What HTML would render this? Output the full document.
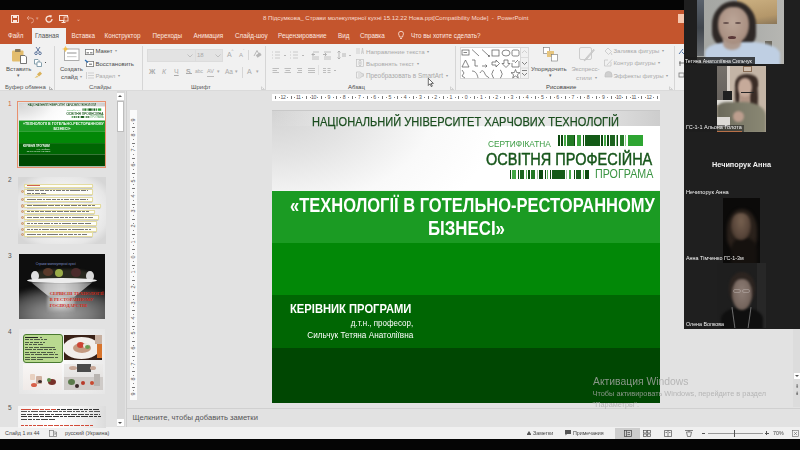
<!DOCTYPE html>
<html><head><meta charset="utf-8">
<style>
*{margin:0;padding:0;box-sizing:border-box}
html,body{width:800px;height:450px;overflow:hidden;background:#050505;font-family:"Liberation Sans",sans-serif;position:relative}
.a{position:absolute;white-space:nowrap;line-height:1}
#title{left:0;top:10px;width:684px;height:34px;background:#c4552d}
#ribbon{left:0;top:44px;width:684px;height:47px;background:#f1f1f1;border-bottom:1px solid #dadada}
#pane{left:0;top:91px;width:800px;height:336px;background:#e2e2e2}
#status{left:0;top:427px;width:800px;height:12px;background:#f0f0f0}
#video{left:684px;top:0;width:116px;height:329px;background:#1f1f1f;overflow:hidden}
.tab{top:33px;font-size:6.3px;color:#fde9e0}
.t6{font-size:6px;color:#4a4a4a}
.dd{font-size:4px;color:#9a9a9a;vertical-align:1px;margin-left:1px}
.dis{color:#a9a9a9}
.sep{position:absolute;width:1px;background:#d6d6d6}
svg{position:absolute;overflow:visible}
.slt{transform-origin:0 0}
.slr{transform-origin:100% 0}
.rl{position:absolute;top:1px;width:10px;text-align:center;font-size:5.2px;letter-spacing:-0.4px;color:#555;line-height:1}
.rt1{position:absolute;top:2px;width:0.7px;height:2.8px;background:#777}
.rd{position:absolute;top:3px;width:0.8px;height:0.8px;background:#888}
.vl{position:absolute;left:0.8px;width:6px;height:6px;text-align:center;font-size:5.5px;color:#555;line-height:6px;transform:rotate(-90deg)}
.vt1{position:absolute;left:2.2px;height:0.7px;width:2.8px;background:#777}
.vd{position:absolute;left:3.2px;width:0.8px;height:0.8px;background:#888}
</style></head><body><div id="wrap" style="position:absolute;left:0;top:0;width:800px;height:450px;filter:blur(0.35px)">
<div class="a" id="title"></div>
<div class="a" id="ribbon"></div>
<div class="a" id="pane"></div>
<div class="a" id="status"></div>

<!-- QAT -->
<svg style="left:11px;top:15px" width="8" height="8" viewBox="0 0 8 8"><rect x="0.5" y="0.5" width="7" height="7" fill="none" stroke="#fbe6dc" stroke-width="1"/><rect x="2" y="0.5" width="4" height="2.5" fill="#fbe6dc"/><rect x="2" y="5" width="4" height="2.5" fill="#fbe6dc"/></svg>
<svg style="left:26px;top:15px" width="9" height="8" viewBox="0 0 9 8"><path d="M1 3 L3 1 M1 3 L3 5 M1 3 H5 a2.5 2.5 0 0 1 0 5" fill="none" stroke="#e09a80" stroke-width="1"/></svg>
<div class="a" style="left:36px;top:16px;font-size:5px;color:#e09a80">▾</div>
<svg style="left:45px;top:14.5px" width="8" height="8" viewBox="0 0 8 8"><path d="M5.5 1.5 A3 3 0 1 0 7 4" fill="none" stroke="#fbe6dc" stroke-width="1.3"/><path d="M4 0 L7 0.5 L6 3 Z" fill="#fbe6dc"/></svg>
<svg style="left:59px;top:15px" width="10" height="8" viewBox="0 0 10 8"><rect x="0.5" y="0.5" width="8" height="5" fill="none" stroke="#fbe6dc"/><path d="M4.5 5.5 V7.5 M2.5 7.5 H6.5" stroke="#fbe6dc"/><rect x="5" y="2" width="4" height="4" fill="#c4552d" stroke="#fbe6dc" stroke-width="0.8"/></svg>
<div class="a" style="left:76px;top:16px;font-size:6px;color:#f0b8a0">⌄</div>
<div class="a" style="left:263px;top:15px;font-size:6.1px;color:#f8ddd2">8 Підсумкова_ Страви молекулярної кухні 15.12.22 Нова.ppt[Compatibility Mode]&nbsp; -&nbsp; PowerPoint</div>
<div class="a" style="left:678px;top:14px;width:6px;height:9px;background:#f6c6ad"></div>

<!-- tabs -->
<div class="a" style="left:32px;top:28px;width:34px;height:16px;background:#f1f1f1"></div>
<div class="a tab" style="left:8px">Файл</div>
<div class="a tab" style="left:35px;color:#555">Главная</div>
<div class="a tab" style="left:71.5px">Вставка</div>
<div class="a tab" style="left:104.5px">Конструктор</div>
<div class="a tab" style="left:152.5px">Переходы</div>
<div class="a tab" style="left:193.5px">Анимация</div>
<div class="a tab" style="left:235px">Слайд-шоу</div>
<div class="a tab" style="left:278px">Рецензирование</div>
<div class="a tab" style="left:338px">Вид</div>
<div class="a tab" style="left:360px">Справка</div>
<svg style="left:398px;top:31px" width="6" height="9" viewBox="0 0 6 9"><path d="M1.5 6 C1.5 4.5 0.5 4 0.5 2.8 A2.5 2.5 0 0 1 5.5 2.8 C5.5 4 4.5 4.5 4.5 6 Z M2 7.5 H4" fill="none" stroke="#fde9e0" stroke-width="0.8"/></svg>
<div class="a tab" style="left:411px">Что вы хотите сделать?</div>

<!-- RIBBON -->
<!-- clipboard -->
<svg style="left:12px;top:48px" width="16" height="16" viewBox="0 0 16 16"><rect x="0" y="2.5" width="11.5" height="11" rx="1" fill="#e3bd6e"/><rect x="3" y="1" width="5.5" height="3" rx="0.5" fill="#8a7a5a"/><path d="M8.5 7.5 H13 L14.5 9 V15.5 H8.5 Z" fill="#fff" stroke="#555" stroke-width="0.8"/></svg>
<div class="a t6" style="left:6px;top:65.5px">Вставить</div>
<div class="a t6" style="left:17px;top:73.0px;font-size:5px;color:#666">▾</div>
<svg style="left:34px;top:47px" width="8" height="8" viewBox="0 0 8 8"><path d="M2 0 L5.5 5 M6 0 L2.5 5" stroke="#3c5a8a" stroke-width="0.8"/><circle cx="2" cy="6.3" r="1.3" fill="none" stroke="#3c5a8a" stroke-width="0.8"/><circle cx="6" cy="6.3" r="1.3" fill="none" stroke="#3c5a8a" stroke-width="0.8"/></svg>
<svg style="left:34px;top:59px" width="8" height="8" viewBox="0 0 8 8"><path d="M0.5 0.5 H4 L5 1.5 V5 H0.5 Z" fill="#fff" stroke="#6a8a9a" stroke-width="0.8"/><path d="M3 3 H6.5 L7.5 4 V7.5 H3 Z" fill="#fff" stroke="#6a8a9a" stroke-width="0.8"/></svg>
<div class="a" style="left:45px;top:62px;width:1px;height:1px;background:#555"></div>
<svg style="left:34px;top:71px" width="8" height="8" viewBox="0 0 8 8"><path d="M0.5 7 L3 4.5 L4.5 6 Z" fill="#e6c36a"/><rect x="3.5" y="1.5" width="4" height="3" transform="rotate(-40 5.5 3)" fill="#d9b15a"/></svg>
<div class="a t6" style="left:5px;top:83.5px;color:#555">Буфер обмена</div>
<svg style="left:48.5px;top:85.5px" width="4" height="4" viewBox="0 0 4 4"><path d="M0.5 0.5 V3.5 H3.5 M1.5 1.5 L3.5 3.5" fill="none" stroke="#888" stroke-width="0.6"/></svg>
<div class="sep" style="left:54px;top:46px;height:44px"></div>

<!-- slides group -->
<svg style="left:63px;top:46px" width="17" height="16" viewBox="0 0 17 16"><rect x="1.5" y="3" width="14.5" height="11.5" fill="#fff" stroke="#9a9a9a" stroke-width="0.8"/><rect x="4" y="6" width="9.5" height="2" fill="#c8c8c8"/><rect x="4" y="10" width="9.5" height="1.2" fill="#d0d0d0"/><circle cx="2.5" cy="3" r="1.8" fill="#f2c14e"/><path d="M2.5 0 V6 M-0.5 3 H5.5" stroke="#f2c14e" stroke-width="0.6"/></svg>
<div class="a t6" style="left:60px;top:65.5px">Создать</div>
<div class="a t6" style="left:61px;top:73.5px">слайд <span class="dd">▾</span></div>
<svg style="left:85px;top:48.5px" width="9" height="6" viewBox="0 0 9 6"><rect x="0.4" y="0.4" width="8.2" height="5.2" fill="#fff" stroke="#777" stroke-width="0.8"/><rect x="1.5" y="3" width="2.5" height="1.5" fill="#999"/><rect x="5" y="3" width="2.5" height="1.5" fill="#999"/></svg>
<div class="a t6" style="left:95.5px;top:48.3px">Макет <span class="dd">▾</span></div>
<svg style="left:85px;top:60px" width="9" height="7" viewBox="0 0 9 7"><rect x="1.4" y="1.4" width="7.2" height="5.2" fill="#fff" stroke="#777" stroke-width="0.8"/><path d="M0 0 L3 2.5" stroke="#2b6cb3" stroke-width="1.2"/><rect x="4" y="3.5" width="3" height="1.5" fill="#999"/></svg>
<div class="a t6" style="left:95.5px;top:60.8px">Восстановить</div>
<svg style="left:86px;top:72px" width="8" height="7" viewBox="0 0 8 7"><path d="M0.5 0 V7 M2 1 H8 M2 3.5 H8 M2 6 H8" stroke="#c8c8c8" stroke-width="0.8"/></svg>
<div class="a t6 dis" style="left:95.5px;top:72.8px">Раздел <span class="dd">▾</span></div>
<div class="a t6" style="left:89px;top:83.5px;color:#555">Слайды</div>
<div class="sep" style="left:142px;top:46px;height:44px"></div>

<!-- font group -->
<div class="a" style="left:147px;top:49.0px;width:48.5px;height:12.5px;background:#e3e3e3;border:1px solid #dcdcdc"></div>
<div class="a" style="left:195px;top:49.0px;width:28px;height:12.5px;background:#e3e3e3;border:1px solid #dcdcdc"></div>
<svg style="left:187px;top:53.5px" width="6" height="4" viewBox="0 0 6 4"><path d="M0.5 0.5 L3 3 L5.5 0.5" fill="none" stroke="#b0b0b0" stroke-width="0.7"/></svg>
<svg style="left:214.5px;top:53.5px" width="6" height="4" viewBox="0 0 6 4"><path d="M0.5 0.5 L3 3 L5.5 0.5" fill="none" stroke="#b0b0b0" stroke-width="0.7"/></svg>
<div class="a t6 dis" style="left:197px;top:51.5px">18</div>
<div class="a t6 dis" style="left:227px;top:51.0px;font-size:7px">A</div>
<div class="a t6 dis" style="left:231.5px;top:49.0px;font-size:4px">^</div>
<div class="a t6 dis" style="left:239px;top:52.0px;font-size:6px">A</div>
<div class="a t6 dis" style="left:243px;top:49.0px;font-size:4px">ˇ</div>
<div class="sep" style="left:248px;top:50.0px;height:10px"></div>
<svg style="left:253px;top:50.0px" width="8" height="8" viewBox="0 0 8 8"><path d="M1 6 L4 0.5 L7 6" fill="none" stroke="#a9a9a9" stroke-width="0.8"/><rect x="3" y="4" width="5" height="3" transform="rotate(-35 5 5)" fill="#b6b6b6"/></svg>
<div class="a t6 dis" style="left:149px;top:68.0px;font-size:7px;font-weight:bold">Ж</div>
<div class="a t6 dis" style="left:162px;top:68.0px;font-size:7px;font-style:italic">К</div>
<div class="a t6 dis" style="left:174px;top:68.0px;font-size:7px;text-decoration:underline">Ч</div>
<div class="a t6 dis" style="left:186px;top:68.0px;font-size:7px;font-weight:bold">S</div>
<div class="a" style="left:185.5px;top:72.5px;width:6px;height:0.8px;background:#a9a9a9"></div>
<div class="a t6 dis" style="left:195px;top:69.0px;font-size:5px">abc</div>
<div class="a t6 dis" style="left:207px;top:68.5px;font-size:5.5px">AV</div>
<div class="a" style="left:207px;top:76.0px;width:7px;height:0.8px;background:#b9b9b9"></div>
<div class="a t6 dis" style="left:217px;top:69.0px;font-size:5px">▾</div>
<div class="a t6 dis" style="left:225px;top:68.5px;font-size:6.5px">Aa</div>
<div class="a t6 dis" style="left:235px;top:69.0px;font-size:5px">▾</div>
<div class="sep" style="left:242px;top:67.0px;height:11px"></div>
<div class="a t6 dis" style="left:247px;top:67.5px;font-size:7px">A</div>
<div class="a t6 dis" style="left:256px;top:69.0px;font-size:5px">▾</div>
<div class="a t6" style="left:191px;top:83.5px;color:#555">Шрифт</div>
<svg style="left:261px;top:86px" width="4" height="4" viewBox="0 0 4 4"><path d="M0.5 0.5 V3.5 H3.5 M1.5 1.5 L3.5 3.5" fill="none" stroke="#bbb" stroke-width="0.6"/></svg>
<div class="sep" style="left:265px;top:46px;height:44px"></div>

<!-- paragraph group -->
<svg style="left:271px;top:51px" width="84" height="26" viewBox="0 0 84 26" fill="none" stroke="#c2c2c2" stroke-width="0.8">
 <path d="M1 1 H2 M1 4 H2 M1 7 H2 M4 1 H9 M4 4 H9 M4 7 H9"/>
 <path d="M13 4 L14 5 L15 4" stroke="#aaa"/>
 <path d="M19 1 H20 M19 4 H20 M19 7 H20 M22 1 H27 M22 4 H27 M22 7 H27"/>
 <path d="M31 4 L32 5 L33 4" stroke="#aaa"/>
 <path d="M42 1 H48 M41 6 H48 M41 8 H48" stroke="#b5b5b5"/><path d="M41 3.5 H44 M42.5 2 L41 3.5 L42.5 5" stroke="#a0a0a0"/>
 <path d="M53 1 H60 M53 6 H60 M53 8 H60" stroke="#b5b5b5"/><path d="M52 3.5 H55 M54 2 L55.5 3.5 L54 5" stroke="#a0a0a0"/>
 <path d="M68 0 V8 M66.5 1.5 L68 0 L69.5 1.5 M66.5 6.5 L68 8 L69.5 6.5 M71 3 H75 M71 5 H75" stroke="#a8a8a8"/>
 <path d="M78 4 L79 5 L80 4" stroke="#aaa"/>
 <path d="M1.5 17.5 H8 M1.5 19.5 H6 M1.5 21.5 H8 M13.5 17.5 H20 M14.5 19.5 H19 M13.5 21.5 H20 M26 17.5 H31 M27 19.5 H31 M26 21.5 H31 M37 17.5 H44 M37 19.5 H44 M37 21.5 H44" stroke="#b8b8b8" stroke-width="0.9"/>
 <path d="M47.5 14 V24" stroke="#dcdcdc"/>
 <path d="M52 17.5 H55 M56.5 17.5 H59.5 M52 19.5 H55 M56.5 19.5 H59.5 M52 21.5 H55 M56.5 21.5 H59.5" stroke="#b8b8b8" stroke-width="0.9"/>
 <path d="M63 19 L64 20 L65 19" stroke="#aaa"/>
</svg>
<svg style="left:356px;top:47px" width="9" height="33" viewBox="0 0 9 33" fill="none" stroke="#c0c0c0" stroke-width="0.7">
 <path d="M1 1 V7 M3 1 V7 M5.5 7 L6.5 1 L7.5 7 M5.8 5 H7.2"/>
 <rect x="0.5" y="12.5" width="7" height="7"/><path d="M4 13 V19 M2.5 14.5 L4 13 L5.5 14.5 M2.5 17.5 L4 19 L5.5 17.5 M2 16 H6"/>
 <path d="M0.5 25 H4 L8 28 L4 31 H0.5 Z M2 27 H8 M2 29 H8"/>
</svg>
<div class="a t6 dis" style="left:366px;top:49px;font-size:6.2px">Направление текста <span class="dd">▾</span></div>
<div class="a t6 dis" style="left:366px;top:61.3px;font-size:6.2px">Выровнять текст <span class="dd">▾</span></div>
<div class="a t6 dis" style="left:366px;top:73.2px;font-size:6.35px">Преобразовать в SmartArt <span class="dd">▾</span></div>
<div class="a t6" style="left:348px;top:83.5px;color:#444">Абзац</div>
<svg style="left:449.5px;top:86px" width="4" height="4" viewBox="0 0 4 4"><path d="M0.5 0.5 V3.5 H3.5 M1.5 1.5 L3.5 3.5" fill="none" stroke="#bbb" stroke-width="0.6"/></svg>
<div class="sep" style="left:454.5px;top:46px;height:44px"></div>

<!-- drawing group -->
<div class="a" style="left:459.5px;top:47px;width:61px;height:32px;background:#fff;border:1px solid #d8d8d8"></div>
<div class="a" style="left:520px;top:47px;width:9px;height:32px;background:#f1f1f1;border:1px solid #d8d8d8"></div>
<svg style="left:520px;top:47px" width="9" height="32" viewBox="0 0 9 32" fill="none" stroke-width="0.8">
 <path d="M2 6 L4.5 3.5 L7 6" stroke="#c8c8c8"/>
 <path d="M0 10.5 H9 M0 21 H9" stroke="#d8d8d8"/>
 <path d="M2 15 L4.5 17.5 L7 15" stroke="#666"/>
 <path d="M2 23.5 H7 M2 26 L4.5 28.5 L7 26" stroke="#666"/>
</svg>
<svg style="left:461px;top:49px" width="60" height="30" viewBox="0 0 60 30" fill="none" stroke="#555" stroke-width="0.7">
 <rect x="1" y="1" width="7" height="5"/><path d="M2.5 3.5 H6"/>
 <path d="M11 0.5 L18 7"/>
 <path d="M21 0.5 L28 7"/><circle cx="28" cy="7" r="0.6" fill="#555"/>
 <rect x="31" y="1" width="7" height="6"/>
 <ellipse cx="45" cy="4" rx="4" ry="3"/>
 <rect x="51" y="1" width="7" height="6" rx="1.5"/>
 <path d="M1 18 L4.5 11 L8 18 Z"/>
 <path d="M11 11 H14 V17 H17"/>
 <path d="M21 17 H26 M24.5 15.5 L26 17 L24.5 18.5"/>
 <path d="M31 13 H35 V11 L38.5 14.5 L35 18 V16 H31 Z"/>
 <path d="M43 11 H47 V14.5 H49 L45 18.5 L41 14.5 H43 Z"/>
 <path d="M51 12 H54 M58 12 V18 H51 V14 M54 14 L57 11"/>
 <path d="M1 21 L3 24 L1 27 L4 29"/>
 <path d="M11 22 C14 22 16 24 17 29"/>
 <path d="M19 24 C21 20 23 22 24 25 C25 28 27 27 28 29"/>
 <path d="M33 21 C31 21 32 25 30.5 25 C32 25 31 29 33 29"/>
 <path d="M39 21 C41 21 40 25 41.5 25 C40 25 41 29 39 29"/>
 <path d="M54.5 20.5 L55.7 23.6 L59 23.7 L56.4 25.7 L57.3 28.9 L54.5 27 L51.7 28.9 L52.6 25.7 L50 23.7 L53.3 23.6 Z"/>
</svg>
<svg style="left:543px;top:47px" width="16" height="15" viewBox="0 0 16 15"><rect x="0.5" y="0.5" width="6" height="6" fill="#fff" stroke="#777" stroke-width="0.6"/><rect x="4" y="4" width="7" height="6" fill="#e6c57e"/><rect x="8.5" y="7.5" width="6" height="6.5" fill="#fff" stroke="#777" stroke-width="0.6"/></svg>
<div class="a t6" style="left:531px;top:66.2px">Упорядочить</div>
<div class="a t6" style="left:549px;top:73.0px;font-size:5px;color:#666">▾</div>
<svg style="left:579px;top:47px" width="16" height="16" viewBox="0 0 16 16" fill="none" stroke="#c4c4c4" stroke-width="0.8"><rect x="0.5" y="0.5" width="12" height="12" rx="1.5"/><path d="M15 2 L7 11 L5 14 L8 12 L15.5 3" fill="#d0d0d0"/></svg>
<div class="a t6 dis" style="left:571.5px;top:66.2px">Экспресс-</div>
<div class="a t6 dis" style="left:576px;top:74.5px">стили <span class="dd">▾</span></div>
<svg style="left:604px;top:47px" width="9" height="33" viewBox="0 0 9 33" fill="none" stroke="#c0c0c0" stroke-width="0.7">
 <path d="M1 4 L4 1 L7.5 4.5 L4.5 7.5 Z M7 6 L8 8"/>
 <path d="M0.5 13 H4 M0.5 13 V19 H7 V15 M3 18 L8 12.5"/>
 <path d="M1 28 A3.5 3.5 0 0 1 8 28 V30 H1 Z" fill="#cfcfcf"/>
</svg>
<div class="a t6 dis" style="left:613.5px;top:48px">Заливка фигуры <span class="dd">▾</span></div>
<div class="a t6 dis" style="left:613.5px;top:60px">Контур фигуры <span class="dd">▾</span></div>
<div class="a t6 dis" style="left:613.5px;top:72.5px">Эффекты фигуры <span class="dd">▾</span></div>
<div class="a t6" style="left:546px;top:83.5px;color:#444">Рисование</div>
<svg style="left:668.5px;top:86px" width="4" height="4" viewBox="0 0 4 4"><path d="M0.5 0.5 V3.5 H3.5 M1.5 1.5 L3.5 3.5" fill="none" stroke="#bbb" stroke-width="0.6"/></svg>
<div class="sep" style="left:674px;top:46px;height:44px"></div>
<svg style="left:678px;top:48px" width="6" height="30" viewBox="0 0 6 30" fill="none" stroke="#2b5797" stroke-width="0.8"><path d="M1 6 L5 1 M4 4 L6 6"/><path d="M1 15 H6 M2 13 V18" stroke="#555"/><rect x="1" y="25" width="5" height="4" stroke="#777"/></svg>


<svg style="left:427.5px;top:77.5px" width="6" height="9" viewBox="0 0 6 9"><path d="M0.3 0.3 V7.5 L2 5.8 L3.3 8.6 L4.3 8.1 L3.1 5.4 L5.4 5.4 Z" fill="#fff" stroke="#111" stroke-width="0.6"/></svg>
<!--PANESTART-->
<!-- thumbnails pane -->
<div class="a" style="left:8px;top:101px;font-size:6.5px;color:#d0643c">1</div>
<div class="a" style="left:16.9px;top:100.9px;width:89.6px;height:67.5px;border:1.6px solid #e8906e"></div>
<div class="a" style="left:19px;top:103px;width:388px;height:293px;transform:scale(0.2216,0.2167);transform-origin:0 0;overflow:hidden">
  <div class="a" style="left:0;top:0;width:388px;height:80px;background:#fff"></div>
  <div class="a" style="left:0;top:0;width:388px;height:80px;background:radial-gradient(ellipse 230px 140px at 0 0,#d3d3d3 0%,#e4e4e4 35%,rgba(245,245,245,0.6) 70%,rgba(255,255,255,0) 100%)"></div>
  <div class="a" style="left:0;top:0;width:388px;height:16px;background:linear-gradient(90deg,rgba(230,230,230,0) 0%,rgba(236,236,236,0.8) 35%,#ececec 60%,#e0e0e0 85%,#cdcdcd 100%)"></div>
  <div class="a" style="left:0;top:0;width:388px;height:1px;background:#c8c8c8"></div>
  <div class="a slt" style="left:40.2px;top:5.2px;font-size:13.7px;color:#1a4d1e;transform:scaleX(0.808);-webkit-text-stroke:0.25px #1a4d1e">НАЦІОНАЛЬНИЙ УНІВЕРСИТЕТ ХАРЧОВИХ ТЕХНОЛОГІЙ</div>
  <div class="a slt" style="left:215.5px;top:28.5px;font-size:9.7px;color:#3c9c44;transform:scaleX(0.86)">СЕРТИФІКАТНА</div>
  <div class="a" style="left:286.10px;top:25px;width:1.65px;height:11.25px;background:#0d4a10"></div>
<div class="a" style="left:289.00px;top:25px;width:1.50px;height:11.25px;background:#0d4a10"></div>
<div class="a" style="left:291.75px;top:25px;width:1.85px;height:11.25px;background:#43a845"></div>
<div class="a" style="left:294.90px;top:25px;width:6.85px;height:11.25px;background:#237a25"></div>
<div class="a" style="left:302.40px;top:25px;width:0.80px;height:11.25px;background:#0d4a10"></div>
<div class="a" style="left:304.90px;top:25px;width:4.35px;height:11.25px;background:#3aa33c"></div>
<div class="a" style="left:310.75px;top:25px;width:1.00px;height:11.25px;background:#0d4a10"></div>
<div class="a" style="left:313.00px;top:25px;width:15.00px;height:11.25px;background:#135a16"></div>
<div class="a" style="left:329.00px;top:25px;width:1.75px;height:11.25px;background:#0d4a10"></div>
<div class="a" style="left:332.00px;top:25px;width:2.00px;height:11.25px;background:#43a845"></div>
<div class="a" style="left:334.90px;top:25px;width:1.85px;height:11.25px;background:#0d4a10"></div>
<div class="a" style="left:338.00px;top:25px;width:5.00px;height:11.25px;background:#1d6420"></div>
<div class="a" style="left:343.60px;top:25px;width:0.80px;height:11.25px;background:#7fbf80"></div>
<div class="a" style="left:344.90px;top:25px;width:1.20px;height:11.25px;background:#0d4a10"></div>
<div class="a" style="left:348.00px;top:25px;width:3.75px;height:11.25px;background:#237a25"></div>
<div class="a" style="left:353.00px;top:25px;width:1.25px;height:11.25px;background:#8fc890"></div>
<div class="a" style="left:356.00px;top:25px;width:15.00px;height:11.25px;background:#2ea532"></div>
<div class="a" style="left:238.00px;top:60px;width:1.00px;height:9px;background:#0d4a10"></div>
<div class="a" style="left:240.00px;top:60px;width:3.70px;height:9px;background:#43a845"></div>
<div class="a" style="left:245.60px;top:60px;width:0.90px;height:9px;background:#0d4a10"></div>
<div class="a" style="left:247.90px;top:60px;width:4.20px;height:9px;background:#1d6420"></div>
<div class="a" style="left:253.80px;top:60px;width:1.20px;height:9px;background:#5fb860"></div>
<div class="a" style="left:256.00px;top:60px;width:1.75px;height:9px;background:#0d4a10"></div>
<div class="a" style="left:259.00px;top:60px;width:3.50px;height:9px;background:#237a25"></div>
<div class="a" style="left:265.00px;top:60px;width:1.00px;height:9px;background:#a0c0a0"></div>
<div class="a" style="left:267.30px;top:60px;width:3.40px;height:9px;background:#0d4a10"></div>
<div class="a" style="left:272.60px;top:60px;width:1.10px;height:9px;background:#0d4a10"></div>
<div class="a" style="left:274.80px;top:60px;width:1.50px;height:9px;background:#5fb860"></div>
<div class="a" style="left:278.00px;top:60px;width:1.10px;height:9px;background:#0d4a10"></div>
<div class="a" style="left:280.25px;top:60px;width:12.35px;height:9px;background:#135a16"></div>
<div class="a" style="left:294.30px;top:60px;width:1.10px;height:9px;background:#a8c0a8"></div>
<div class="a" style="left:296.90px;top:60px;width:2.50px;height:9px;background:#43a845"></div>
<div class="a" style="left:302.20px;top:60px;width:1.10px;height:9px;background:#0d4a10"></div>
<div class="a" style="left:304.40px;top:60px;width:4.60px;height:9px;background:#1d6420"></div>
<div class="a" style="left:310.60px;top:60px;width:1.70px;height:9px;background:#5fb860"></div>
<div class="a" style="left:313.40px;top:60px;width:3.40px;height:9px;background:#0d4a10"></div>
  <div class="a slt" style="left:214px;top:41.9px;font-size:16.7px;color:#17561b;transform:scaleX(0.87);-webkit-text-stroke:0.45px #17561b">ОСВІТНЯ ПРОФЕСІЙНА</div>
  <div class="a slt" style="left:322.6px;top:58.6px;font-size:11.9px;color:#3a9442;transform:scaleX(0.90)">ПРОГРАМА</div>
  <div class="a" style="left:0;top:80px;width:388px;height:1px;background:#f4f4f4"></div><div class="a" style="left:0;top:81px;width:388px;height:51.5px;background:#1b9b23"></div>
  <div class="a" style="left:0;top:132.5px;width:388px;height:52.5px;background:#028807"></div>
  <div class="a" style="left:0;top:185px;width:388px;height:52.5px;background:#006603"></div>
  <div class="a" style="left:0;top:237.5px;width:388px;height:55.5px;background:#004702"></div>
  <div class="a slt" style="left:18px;top:85.9px;font-size:19.6px;font-weight:bold;color:#fff;transform:scaleX(0.843)">«ТЕХНОЛОГІЇ В ГОТЕЛЬНО-РЕСТОРАННОМУ</div>
  <div class="a slt" style="left:156px;top:109.4px;font-size:19.6px;font-weight:bold;color:#fff;transform:scaleX(0.86)">БІЗНЕСІ»</div>
  <div class="a slt" style="left:18.3px;top:192.6px;font-size:12.7px;font-weight:bold;color:#fff;transform:scaleX(0.8825)">КЕРІВНИК ПРОГРАМИ</div>
  <div class="a slr" style="right:246.4px;top:208px;font-size:9.5px;color:#fff;transform:scaleX(0.84)">д.т.н., професор,</div>
  <div class="a slr" style="right:246.4px;top:220px;font-size:9.5px;color:#fff;transform:scaleX(0.86)">Сильчук Тетяна Анатоліївна</div>
</div>
<div class="a" style="left:8px;top:177px;font-size:6.5px;color:#555">2</div>
<div id="th2" class="a" style="left:18px;top:177px;width:88px;height:66.5px;background:radial-gradient(ellipse 55px 42px at 50% 50%,#fdfdfd 30%,#e6e6e6 85%,#d6d6d6 100%);overflow:hidden"><div class="a" style="left:6.4px;top:6.6px;width:68.8px;height:4.0px;background:rgba(255,255,250,0.85);border:0.5px solid #e4dca0;box-shadow:0 0.5px 0.8px rgba(0,0,0,0.15)"></div><div class="a" style="left:8.5px;top:7.9px;width:13px;height:1.3px;background:#d0604e"></div><div class="a" style="left:6.4px;top:11.7px;width:68.8px;height:6.1px;background:rgba(255,255,250,0.85);border:0.5px solid #e4dca0;box-shadow:0 0.5px 0.8px rgba(0,0,0,0.15)"></div><div class="a" style="left:2.8px;top:13.1px;width:3.4px;height:3.4px;border-radius:50%;background:#e6c09a;border:0.5px solid #c89870"></div><div class="a" style="left:8.5px;top:13.1px;width:3.0px;height:1px;background:#777"></div><div class="a" style="left:12.3px;top:13.1px;width:4.2px;height:1px;background:#777"></div><div class="a" style="left:17.2px;top:13.1px;width:3.5px;height:1px;background:#777"></div><div class="a" style="left:21.5px;top:13.1px;width:4.4px;height:1px;background:#777"></div><div class="a" style="left:26.7px;top:13.1px;width:4.5px;height:1px;background:#777"></div><div class="a" style="left:32.0px;top:13.1px;width:2.3px;height:1px;background:#777"></div><div class="a" style="left:35.1px;top:13.1px;width:2.1px;height:1px;background:#777"></div><div class="a" style="left:37.9px;top:13.1px;width:5.3px;height:1px;background:#777"></div><div class="a" style="left:44.1px;top:13.1px;width:3.0px;height:1px;background:#777"></div><div class="a" style="left:47.9px;top:13.1px;width:2.9px;height:1px;background:#777"></div><div class="a" style="left:51.7px;top:13.1px;width:6.0px;height:1px;background:#777"></div><div class="a" style="left:58.4px;top:13.1px;width:3.9px;height:1px;background:#777"></div><div class="a" style="left:63.1px;top:13.1px;width:5.3px;height:1px;background:#777"></div><div class="a" style="left:69.3px;top:13.1px;width:0.2px;height:1px;background:#777"></div><div class="a" style="left:8.5px;top:15.5px;width:4.6px;height:1px;background:#777"></div><div class="a" style="left:13.9px;top:15.5px;width:2.6px;height:1px;background:#777"></div><div class="a" style="left:17.3px;top:15.5px;width:4.5px;height:1px;background:#777"></div><div class="a" style="left:22.6px;top:15.5px;width:5.2px;height:1px;background:#777"></div><div class="a" style="left:6.4px;top:20.2px;width:68.8px;height:4.8px;background:rgba(255,255,250,0.85);border:0.5px solid #e4dca0;box-shadow:0 0.5px 0.8px rgba(0,0,0,0.15)"></div><div class="a" style="left:2.8px;top:20.9px;width:3.4px;height:3.4px;border-radius:50%;background:#e6c09a;border:0.5px solid #c89870"></div><div class="a" style="left:8.5px;top:22.0px;width:4.1px;height:1px;background:#777"></div><div class="a" style="left:13.4px;top:22.0px;width:5.0px;height:1px;background:#777"></div><div class="a" style="left:19.2px;top:22.0px;width:4.7px;height:1px;background:#777"></div><div class="a" style="left:24.6px;top:22.0px;width:2.3px;height:1px;background:#777"></div><div class="a" style="left:27.7px;top:22.0px;width:5.0px;height:1px;background:#777"></div><div class="a" style="left:33.5px;top:22.0px;width:4.4px;height:1px;background:#777"></div><div class="a" style="left:38.7px;top:22.0px;width:3.2px;height:1px;background:#777"></div><div class="a" style="left:42.7px;top:22.0px;width:2.1px;height:1px;background:#777"></div><div class="a" style="left:45.6px;top:22.0px;width:5.5px;height:1px;background:#777"></div><div class="a" style="left:51.9px;top:22.0px;width:3.9px;height:1px;background:#777"></div><div class="a" style="left:56.6px;top:22.0px;width:4.9px;height:1px;background:#777"></div><div class="a" style="left:62.3px;top:22.0px;width:5.5px;height:1px;background:#777"></div><div class="a" style="left:68.6px;top:22.0px;width:0.9px;height:1px;background:#777"></div><div class="a" style="left:6.4px;top:26.6px;width:76.8px;height:4.8px;background:rgba(255,255,250,0.85);border:0.5px solid #e4dca0;box-shadow:0 0.5px 0.8px rgba(0,0,0,0.15)"></div><div class="a" style="left:2.8px;top:27.3px;width:3.4px;height:3.4px;border-radius:50%;background:#e6c09a;border:0.5px solid #c89870"></div><div class="a" style="left:8.5px;top:28.4px;width:5.7px;height:1px;background:#777"></div><div class="a" style="left:15.0px;top:28.4px;width:3.6px;height:1px;background:#777"></div><div class="a" style="left:19.4px;top:28.4px;width:5.2px;height:1px;background:#777"></div><div class="a" style="left:25.4px;top:28.4px;width:3.8px;height:1px;background:#777"></div><div class="a" style="left:29.9px;top:28.4px;width:5.7px;height:1px;background:#777"></div><div class="a" style="left:36.5px;top:28.4px;width:5.5px;height:1px;background:#777"></div><div class="a" style="left:42.8px;top:28.4px;width:2.4px;height:1px;background:#777"></div><div class="a" style="left:46.0px;top:28.4px;width:2.5px;height:1px;background:#777"></div><div class="a" style="left:49.3px;top:28.4px;width:2.9px;height:1px;background:#777"></div><div class="a" style="left:53.0px;top:28.4px;width:5.9px;height:1px;background:#777"></div><div class="a" style="left:59.7px;top:28.4px;width:3.7px;height:1px;background:#777"></div><div class="a" style="left:64.2px;top:28.4px;width:4.5px;height:1px;background:#777"></div><div class="a" style="left:69.5px;top:28.4px;width:3.2px;height:1px;background:#777"></div><div class="a" style="left:73.5px;top:28.4px;width:3.6px;height:1px;background:#777"></div><div class="a" style="left:6.4px;top:32.5px;width:70.6px;height:4.2px;background:rgba(255,255,250,0.85);border:0.5px solid #e4dca0;box-shadow:0 0.5px 0.8px rgba(0,0,0,0.15)"></div><div class="a" style="left:2.8px;top:32.9px;width:3.4px;height:3.4px;border-radius:50%;background:#e6c09a;border:0.5px solid #c89870"></div><div class="a" style="left:8.5px;top:34.0px;width:3.5px;height:1px;background:#777"></div><div class="a" style="left:12.8px;top:34.0px;width:3.4px;height:1px;background:#777"></div><div class="a" style="left:17.0px;top:34.0px;width:4.3px;height:1px;background:#777"></div><div class="a" style="left:22.2px;top:34.0px;width:4.3px;height:1px;background:#777"></div><div class="a" style="left:27.3px;top:34.0px;width:5.6px;height:1px;background:#777"></div><div class="a" style="left:33.7px;top:34.0px;width:4.7px;height:1px;background:#777"></div><div class="a" style="left:39.3px;top:34.0px;width:5.7px;height:1px;background:#777"></div><div class="a" style="left:45.8px;top:34.0px;width:5.4px;height:1px;background:#777"></div><div class="a" style="left:52.0px;top:34.0px;width:6.0px;height:1px;background:#777"></div><div class="a" style="left:58.8px;top:34.0px;width:4.7px;height:1px;background:#777"></div><div class="a" style="left:64.3px;top:34.0px;width:2.7px;height:1px;background:#777"></div><div class="a" style="left:67.7px;top:34.0px;width:3.5px;height:1px;background:#777"></div><div class="a" style="left:6.4px;top:37.8px;width:74.6px;height:4.8px;background:rgba(255,255,250,0.85);border:0.5px solid #e4dca0;box-shadow:0 0.5px 0.8px rgba(0,0,0,0.15)"></div><div class="a" style="left:2.8px;top:38.5px;width:3.4px;height:3.4px;border-radius:50%;background:#e6c09a;border:0.5px solid #c89870"></div><div class="a" style="left:8.5px;top:39.6px;width:5.9px;height:1px;background:#777"></div><div class="a" style="left:15.2px;top:39.6px;width:5.6px;height:1px;background:#777"></div><div class="a" style="left:21.6px;top:39.6px;width:4.3px;height:1px;background:#777"></div><div class="a" style="left:26.7px;top:39.6px;width:4.9px;height:1px;background:#777"></div><div class="a" style="left:32.3px;top:39.6px;width:2.8px;height:1px;background:#777"></div><div class="a" style="left:36.0px;top:39.6px;width:5.3px;height:1px;background:#777"></div><div class="a" style="left:42.1px;top:39.6px;width:4.3px;height:1px;background:#777"></div><div class="a" style="left:47.2px;top:39.6px;width:3.1px;height:1px;background:#777"></div><div class="a" style="left:51.1px;top:39.6px;width:2.3px;height:1px;background:#777"></div><div class="a" style="left:54.2px;top:39.6px;width:5.4px;height:1px;background:#777"></div><div class="a" style="left:60.4px;top:39.6px;width:6.0px;height:1px;background:#777"></div><div class="a" style="left:67.1px;top:39.6px;width:2.4px;height:1px;background:#777"></div><div class="a" style="left:70.3px;top:39.6px;width:4.7px;height:1px;background:#777"></div><div class="a" style="left:6.4px;top:44.2px;width:72.6px;height:4.8px;background:rgba(255,255,250,0.85);border:0.5px solid #e4dca0;box-shadow:0 0.5px 0.8px rgba(0,0,0,0.15)"></div><div class="a" style="left:2.8px;top:44.9px;width:3.4px;height:3.4px;border-radius:50%;background:#e6c09a;border:0.5px solid #c89870"></div><div class="a" style="left:8.5px;top:46.0px;width:3.6px;height:1px;background:#777"></div><div class="a" style="left:12.9px;top:46.0px;width:2.6px;height:1px;background:#777"></div><div class="a" style="left:16.3px;top:46.0px;width:3.2px;height:1px;background:#777"></div><div class="a" style="left:20.3px;top:46.0px;width:5.1px;height:1px;background:#777"></div><div class="a" style="left:26.2px;top:46.0px;width:5.5px;height:1px;background:#777"></div><div class="a" style="left:32.5px;top:46.0px;width:2.2px;height:1px;background:#777"></div><div class="a" style="left:35.5px;top:46.0px;width:4.5px;height:1px;background:#777"></div><div class="a" style="left:40.7px;top:46.0px;width:2.2px;height:1px;background:#777"></div><div class="a" style="left:43.7px;top:46.0px;width:4.9px;height:1px;background:#777"></div><div class="a" style="left:49.4px;top:46.0px;width:3.3px;height:1px;background:#777"></div><div class="a" style="left:53.5px;top:46.0px;width:5.5px;height:1px;background:#777"></div><div class="a" style="left:59.8px;top:46.0px;width:5.9px;height:1px;background:#777"></div><div class="a" style="left:66.5px;top:46.0px;width:4.0px;height:1px;background:#777"></div><div class="a" style="left:71.4px;top:46.0px;width:1.7px;height:1px;background:#777"></div><div class="a" style="left:6.4px;top:49.8px;width:72.6px;height:4.8px;background:rgba(255,255,250,0.85);border:0.5px solid #e4dca0;box-shadow:0 0.5px 0.8px rgba(0,0,0,0.15)"></div><div class="a" style="left:2.8px;top:50.5px;width:3.4px;height:3.4px;border-radius:50%;background:#e6c09a;border:0.5px solid #c89870"></div><div class="a" style="left:8.5px;top:51.6px;width:3.2px;height:1px;background:#777"></div><div class="a" style="left:12.5px;top:51.6px;width:2.3px;height:1px;background:#777"></div><div class="a" style="left:15.6px;top:51.6px;width:4.4px;height:1px;background:#777"></div><div class="a" style="left:20.8px;top:51.6px;width:2.1px;height:1px;background:#777"></div><div class="a" style="left:23.8px;top:51.6px;width:2.8px;height:1px;background:#777"></div><div class="a" style="left:27.4px;top:51.6px;width:3.6px;height:1px;background:#777"></div><div class="a" style="left:31.8px;top:51.6px;width:4.4px;height:1px;background:#777"></div><div class="a" style="left:37.0px;top:51.6px;width:2.6px;height:1px;background:#777"></div><div class="a" style="left:40.5px;top:51.6px;width:2.2px;height:1px;background:#777"></div><div class="a" style="left:43.4px;top:51.6px;width:5.5px;height:1px;background:#777"></div><div class="a" style="left:49.7px;top:51.6px;width:3.3px;height:1px;background:#777"></div><div class="a" style="left:53.8px;top:51.6px;width:5.8px;height:1px;background:#777"></div><div class="a" style="left:60.4px;top:51.6px;width:5.6px;height:1px;background:#777"></div><div class="a" style="left:66.8px;top:51.6px;width:3.5px;height:1px;background:#777"></div><div class="a" style="left:71.1px;top:51.6px;width:2.0px;height:1px;background:#777"></div><div class="a" style="left:6.4px;top:55.4px;width:68.6px;height:4.3px;background:rgba(255,255,250,0.85);border:0.5px solid #e4dca0;box-shadow:0 0.5px 0.8px rgba(0,0,0,0.15)"></div><div class="a" style="left:2.8px;top:55.9px;width:3.4px;height:3.4px;border-radius:50%;background:#e6c09a;border:0.5px solid #c89870"></div><div class="a" style="left:8.5px;top:57.0px;width:4.1px;height:1px;background:#777"></div><div class="a" style="left:13.4px;top:57.0px;width:4.6px;height:1px;background:#777"></div><div class="a" style="left:18.8px;top:57.0px;width:4.4px;height:1px;background:#777"></div><div class="a" style="left:23.9px;top:57.0px;width:4.2px;height:1px;background:#777"></div><div class="a" style="left:29.0px;top:57.0px;width:4.5px;height:1px;background:#777"></div><div class="a" style="left:34.3px;top:57.0px;width:5.8px;height:1px;background:#777"></div><div class="a" style="left:40.8px;top:57.0px;width:4.0px;height:1px;background:#777"></div><div class="a" style="left:45.6px;top:57.0px;width:3.7px;height:1px;background:#777"></div><div class="a" style="left:50.2px;top:57.0px;width:4.9px;height:1px;background:#777"></div><div class="a" style="left:55.9px;top:57.0px;width:3.0px;height:1px;background:#777"></div><div class="a" style="left:59.6px;top:57.0px;width:3.2px;height:1px;background:#777"></div><div class="a" style="left:63.6px;top:57.0px;width:5.7px;height:1px;background:#777"></div></div>
<div class="a" style="left:8px;top:253px;font-size:6.5px;color:#555">3</div>
<div id="th3" class="a" style="left:18.8px;top:254px;width:86.4px;height:64.5px;background:#0e0e0e;overflow:hidden"><div class="a" style="left:-10px;top:24px;width:107px;height:45px;background:radial-gradient(ellipse 70px 30px at 50% 80%,#a0a0a0,#7a7a7a 40%,#505050 70%,rgba(30,30,30,0) 100%);filter:blur(1.5px)"></div>
<div class="a" style="left:17px;top:8.5px;font-size:3.2px;color:#7f90c8">Страви молекулярної кухні</div>
<div class="a" style="left:15px;top:15px;width:56px;height:12px;background:#2a2a20;border-radius:40% 40% 10% 10%;filter:blur(0.8px)"></div>
<div class="a" style="left:24px;top:14px;width:10px;height:8px;background:#5a3a2a;border-radius:50%;filter:blur(0.7px)"></div>
<div class="a" style="left:36px;top:15px;width:8px;height:8px;background:#9aac48;border-radius:50%;filter:blur(0.7px)"></div>
<div class="a" style="left:52px;top:14px;width:10px;height:9px;background:#4a2a2a;border-radius:50%;filter:blur(0.7px)"></div>
<div class="a" style="left:12px;top:17px;width:8px;height:10px;background:#e0e0e0;border-radius:50%;filter:blur(0.7px)"></div>
<div class="a" style="left:67px;top:17px;width:8px;height:10px;background:#d8d8d8;border-radius:50%;filter:blur(0.7px)"></div>
<div class="a" style="left:8px;top:24px;width:70px;height:5px;background:#ececec;border-radius:50%;filter:blur(0.5px)"></div>
<div class="a" style="left:12px;top:28px;width:62px;height:15px;background:linear-gradient(90deg,#8a8a8a,#dadada 25%,#f0f0f0 50%,#d0d0d0 75%,#8a8a8a);clip-path:polygon(0 0,100% 0,70% 100%,30% 100%);filter:blur(0.8px);opacity:0.85"></div>
<div class="a" style="left:28px;top:38px;width:28px;height:20px;background:radial-gradient(#e8e8e8,#b0b0b0 55%,rgba(120,120,120,0) 100%);filter:blur(1px)"></div>
<div class="a" style="left:31px;top:36.5px;font-size:4.6px;line-height:6.2px;color:#d42a1a;font-family:'Liberation Serif',serif;font-weight:bold;white-space:pre">СЕРВІСНІ ТЕХНОЛОГІЇ
В РЕСТОРАННОМУ
ГОСПОДАРСТВІ</div></div>
<div class="a" style="left:8px;top:329px;font-size:6.5px;color:#555">4</div>
<div id="th4" class="a" style="left:18.8px;top:329px;width:86.4px;height:65px;background:#ededed;overflow:hidden"><div class="a" style="left:0;top:0;width:87px;height:65px;background:radial-gradient(ellipse 60px 45px at 50% 50%,#fbfbfb,#e6e6e6)"></div>
<div class="a" style="left:4px;top:5.3px;width:40px;height:28.3px;background:#b9d98f;border:0.6px solid #4a7a30;border-radius:3px"></div>
<div class="a" style="left:6.5px;top:7.8px;width:13px;height:1px;background:#222"></div>
<div class="a" style="left:21px;top:7.8px;width:2px;height:1px;background:#555"></div>
<div class="a" style="left:6.5px;top:10.3px;width:4.0px;height:0.8px;background:#4e5a44"></div><div class="a" style="left:11.4px;top:10.3px;width:3.2px;height:0.8px;background:#4e5a44"></div><div class="a" style="left:15.4px;top:10.3px;width:5.4px;height:0.8px;background:#4e5a44"></div><div class="a" style="left:21.8px;top:10.3px;width:2.8px;height:0.8px;background:#4e5a44"></div><div class="a" style="left:25.5px;top:10.3px;width:3.0px;height:0.8px;background:#4e5a44"></div><div class="a" style="left:6.5px;top:12.8px;width:4.1px;height:0.8px;background:#4e5a44"></div><div class="a" style="left:11.5px;top:12.8px;width:2.8px;height:0.8px;background:#4e5a44"></div><div class="a" style="left:15.2px;top:12.8px;width:4.8px;height:0.8px;background:#4e5a44"></div><div class="a" style="left:20.9px;top:12.8px;width:2.7px;height:0.8px;background:#4e5a44"></div><div class="a" style="left:24.5px;top:12.8px;width:2.0px;height:0.8px;background:#4e5a44"></div><div class="a" style="left:6.5px;top:15.3px;width:2.8px;height:0.8px;background:#4e5a44"></div><div class="a" style="left:10.2px;top:15.3px;width:2.9px;height:0.8px;background:#4e5a44"></div><div class="a" style="left:14.0px;top:15.3px;width:4.4px;height:0.8px;background:#4e5a44"></div><div class="a" style="left:19.3px;top:15.3px;width:5.2px;height:0.8px;background:#4e5a44"></div><div class="a" style="left:6.5px;top:17.8px;width:3.1px;height:0.8px;background:#4e5a44"></div><div class="a" style="left:10.5px;top:17.8px;width:3.5px;height:0.8px;background:#4e5a44"></div><div class="a" style="left:14.9px;top:17.8px;width:5.3px;height:0.8px;background:#4e5a44"></div><div class="a" style="left:21.1px;top:17.8px;width:6.8px;height:0.8px;background:#4e5a44"></div><div class="a" style="left:28.7px;top:17.8px;width:5.1px;height:0.8px;background:#4e5a44"></div><div class="a" style="left:34.7px;top:17.8px;width:1.8px;height:0.8px;background:#4e5a44"></div><div class="a" style="left:6.5px;top:20.3px;width:6.9px;height:0.8px;background:#4e5a44"></div><div class="a" style="left:14.3px;top:20.3px;width:2.7px;height:0.8px;background:#4e5a44"></div><div class="a" style="left:17.9px;top:20.3px;width:6.4px;height:0.8px;background:#4e5a44"></div><div class="a" style="left:25.2px;top:20.3px;width:3.8px;height:0.8px;background:#4e5a44"></div><div class="a" style="left:29.9px;top:20.3px;width:3.1px;height:0.8px;background:#4e5a44"></div><div class="a" style="left:33.9px;top:20.3px;width:3.0px;height:0.8px;background:#4e5a44"></div><div class="a" style="left:6.5px;top:22.8px;width:3.9px;height:0.8px;background:#4e5a44"></div><div class="a" style="left:11.3px;top:22.8px;width:6.2px;height:0.8px;background:#4e5a44"></div><div class="a" style="left:18.4px;top:22.8px;width:3.3px;height:0.8px;background:#4e5a44"></div><div class="a" style="left:22.6px;top:22.8px;width:5.1px;height:0.8px;background:#4e5a44"></div><div class="a" style="left:28.6px;top:22.8px;width:5.4px;height:0.8px;background:#4e5a44"></div><div class="a" style="left:34.9px;top:22.8px;width:1.6px;height:0.8px;background:#4e5a44"></div><div class="a" style="left:6.5px;top:25.3px;width:5.0px;height:0.8px;background:#4e5a44"></div><div class="a" style="left:12.4px;top:25.3px;width:2.8px;height:0.8px;background:#4e5a44"></div><div class="a" style="left:16.0px;top:25.3px;width:2.8px;height:0.8px;background:#4e5a44"></div><div class="a" style="left:19.7px;top:25.3px;width:3.4px;height:0.8px;background:#4e5a44"></div><div class="a" style="left:24.0px;top:25.3px;width:5.6px;height:0.8px;background:#4e5a44"></div><div class="a" style="left:30.5px;top:25.3px;width:4.4px;height:0.8px;background:#4e5a44"></div><div class="a" style="left:35.8px;top:25.3px;width:3.7px;height:0.8px;background:#4e5a44"></div><div class="a" style="left:6.5px;top:27.8px;width:5.1px;height:0.8px;background:#4e5a44"></div><div class="a" style="left:12.5px;top:27.8px;width:4.5px;height:0.8px;background:#4e5a44"></div><div class="a" style="left:18.0px;top:27.8px;width:3.8px;height:0.8px;background:#4e5a44"></div><div class="a" style="left:22.7px;top:27.8px;width:6.1px;height:0.8px;background:#4e5a44"></div><div class="a" style="left:29.7px;top:27.8px;width:5.6px;height:0.8px;background:#4e5a44"></div><div class="a" style="left:36.2px;top:27.8px;width:3.3px;height:0.8px;background:#4e5a44"></div><div class="a" style="left:6.5px;top:30.3px;width:5.1px;height:0.8px;background:#4e5a44"></div><div class="a" style="left:12.5px;top:30.3px;width:4.9px;height:0.8px;background:#4e5a44"></div><div class="a" style="left:18.2px;top:30.3px;width:6.3px;height:0.8px;background:#4e5a44"></div><div class="a" style="left:45.2px;top:6.4px;width:38px;height:25px;background:#3a2218;overflow:hidden">
  <div class="a" style="left:-1px;top:2px;width:37px;height:22px;border-radius:50%;background:#f2eeea;filter:blur(0.4px)"></div>
  <div class="a" style="left:9px;top:8px;width:18px;height:10px;border-radius:50%;background:#c49a80;filter:blur(0.6px)"></div>
  <div class="a" style="left:13px;top:7px;width:7px;height:6px;border-radius:50%;background:#cc4434;filter:blur(0.5px)"></div>
  <div class="a" style="left:19px;top:8px;width:6px;height:5px;border-radius:50%;background:#e8e8e0;filter:blur(0.4px)"></div>
  <div class="a" style="left:21px;top:10px;width:5px;height:4px;border-radius:50%;background:#6a9a50;filter:blur(0.4px)"></div>
  <div class="a" style="left:31px;top:0;width:7px;height:9px;background:#c8b0a0;filter:blur(0.6px)"></div>
  <div class="a" style="left:33px;top:9px;width:5px;height:14px;background:#d8742c;filter:blur(0.6px)"></div>
</div>
<div class="a" style="left:4.2px;top:34.7px;width:39px;height:26px;background:linear-gradient(180deg,#f8f6f5,#f0eae8);overflow:hidden">
  <div class="a" style="left:7px;top:10px;width:5px;height:6px;background:#e8d0c0;border-radius:1px;filter:blur(0.4px)"></div>
  <div class="a" style="left:13px;top:12px;width:6px;height:8px;background:#d0b0a0;border-radius:1px;filter:blur(0.4px)"></div>
  <div class="a" style="left:15px;top:16px;width:4px;height:3px;background:#3a2a2a;border-radius:50%;filter:blur(0.3px)"></div>
  <div class="a" style="left:8px;top:19px;width:6px;height:4px;background:#d8604a;border-radius:50%;filter:blur(0.4px)"></div>
  <div class="a" style="left:25px;top:15px;width:8px;height:6px;background:#7a3028;border-radius:50%;filter:blur(0.5px)"></div>
  <div class="a" style="left:24px;top:14px;width:4px;height:4px;background:#5a8a4a;border-radius:50%;filter:blur(0.4px)"></div>
</div>
<div class="a" style="left:45.2px;top:34.7px;width:39px;height:26px;background:linear-gradient(180deg,#ecebea,#dedcda);overflow:hidden">
  <div class="a" style="left:13px;top:0;width:14px;height:8px;background:#4a4a4a;filter:blur(0.7px)"></div>
  <div class="a" style="left:5px;top:2px;width:8px;height:4px;background:#c8a898;border-radius:50%;filter:blur(0.5px)"></div>
  <div class="a" style="left:26px;top:2px;width:6px;height:4px;background:#c8a898;border-radius:50%;filter:blur(0.5px)"></div>
  <div class="a" style="left:0;top:13px;width:39px;height:13px;background:#cfcbc8;filter:blur(0.4px)"></div>
  <div class="a" style="left:4px;top:15px;width:7px;height:6px;background:#5a7a4a;border-radius:50%;filter:blur(0.6px)"></div>
  <div class="a" style="left:17px;top:17px;width:4px;height:4px;background:#b83a2a;border-radius:50%;filter:blur(0.3px)"></div>
  <div class="a" style="left:26px;top:17px;width:4px;height:4px;background:#c84a30;border-radius:50%;filter:blur(0.3px)"></div>
  <div class="a" style="left:11px;top:20px;width:4px;height:4px;background:#3a2a2a;border-radius:50%;filter:blur(0.3px)"></div>
  <div class="a" style="left:30px;top:10px;width:6px;height:12px;background:#b8b4b0;filter:blur(0.4px)"></div>
</div></div>
<div class="a" style="left:8px;top:405px;font-size:6.5px;color:#555">5</div>
<div id="th5" class="a" style="left:18px;top:405.5px;width:87.5px;height:22px;background:linear-gradient(90deg,#f4f4f4,#fff 40%,#f2f2f2 70%,#dcdcdc);overflow:hidden"><div class="a" style="left:3.0px;top:3.3px;width:4.5px;height:1px;background:#d24a38"></div><div class="a" style="left:8.4px;top:3.3px;width:5.0px;height:1px;background:#d24a38"></div><div class="a" style="left:14.4px;top:3.3px;width:6.7px;height:1px;background:#d24a38"></div><div class="a" style="left:21.9px;top:3.3px;width:4.6px;height:1px;background:#d24a38"></div><div class="a" style="left:27.4px;top:3.3px;width:4.8px;height:1px;background:#d24a38"></div><div class="a" style="left:33.1px;top:3.3px;width:5.1px;height:1px;background:#d24a38"></div><div class="a" style="left:39.1px;top:3.3px;width:3.3px;height:1px;background:#333"></div><div class="a" style="left:43.4px;top:3.3px;width:4.8px;height:1px;background:#333"></div><div class="a" style="left:49.1px;top:3.3px;width:5.3px;height:1px;background:#333"></div><div class="a" style="left:55.3px;top:3.3px;width:6.1px;height:1px;background:#333"></div><div class="a" style="left:62.3px;top:3.3px;width:2.9px;height:1px;background:#333"></div><div class="a" style="left:66.1px;top:3.3px;width:3.9px;height:1px;background:#333"></div><div class="a" style="left:70.9px;top:3.3px;width:2.9px;height:1px;background:#333"></div><div class="a" style="left:74.7px;top:3.3px;width:6.1px;height:1px;background:#333"></div><div class="a" style="left:3.0px;top:5.8px;width:5.6px;height:1px;background:#555"></div><div class="a" style="left:9.5px;top:5.8px;width:2.7px;height:1px;background:#555"></div><div class="a" style="left:13.1px;top:5.8px;width:6.9px;height:1px;background:#555"></div><div class="a" style="left:20.9px;top:5.8px;width:6.8px;height:1px;background:#555"></div><div class="a" style="left:28.7px;top:5.8px;width:5.4px;height:1px;background:#555"></div><div class="a" style="left:35.0px;top:5.8px;width:5.3px;height:1px;background:#555"></div><div class="a" style="left:41.2px;top:5.8px;width:3.2px;height:1px;background:#555"></div><div class="a" style="left:45.3px;top:5.8px;width:2.6px;height:1px;background:#555"></div><div class="a" style="left:48.8px;top:5.8px;width:4.9px;height:1px;background:#555"></div><div class="a" style="left:54.5px;top:5.8px;width:2.8px;height:1px;background:#555"></div><div class="a" style="left:58.2px;top:5.8px;width:3.4px;height:1px;background:#555"></div><div class="a" style="left:62.5px;top:5.8px;width:3.6px;height:1px;background:#555"></div><div class="a" style="left:66.9px;top:5.8px;width:2.6px;height:1px;background:#555"></div><div class="a" style="left:70.5px;top:5.8px;width:4.6px;height:1px;background:#555"></div><div class="a" style="left:76.0px;top:5.8px;width:4.5px;height:1px;background:#555"></div><div class="a" style="left:81.4px;top:5.8px;width:0.6px;height:1px;background:#555"></div><div class="a" style="left:3.0px;top:8.3px;width:4.8px;height:1px;background:#444"></div><div class="a" style="left:8.7px;top:8.3px;width:5.4px;height:1px;background:#444"></div><div class="a" style="left:15.0px;top:8.3px;width:4.7px;height:1px;background:#444"></div><div class="a" style="left:20.7px;top:8.3px;width:5.5px;height:1px;background:#444"></div><div class="a" style="left:27.0px;top:8.3px;width:4.6px;height:1px;background:#444"></div><div class="a" style="left:32.5px;top:8.3px;width:3.8px;height:1px;background:#444"></div><div class="a" style="left:37.2px;top:8.3px;width:7.0px;height:1px;background:#444"></div><div class="a" style="left:45.0px;top:8.3px;width:7.0px;height:1px;background:#444"></div><div class="a" style="left:52.9px;top:8.3px;width:6.3px;height:1px;background:#444"></div><div class="a" style="left:60.1px;top:8.3px;width:5.7px;height:1px;background:#444"></div><div class="a" style="left:66.7px;top:8.3px;width:3.9px;height:1px;background:#444"></div><div class="a" style="left:71.5px;top:8.3px;width:3.5px;height:1px;background:#444"></div><div class="a" style="left:75.9px;top:8.3px;width:3.8px;height:1px;background:#444"></div><div class="a" style="left:80.6px;top:8.3px;width:1.4px;height:1px;background:#444"></div><div class="a" style="left:3.0px;top:10.8px;width:5.9px;height:1px;background:#333"></div><div class="a" style="left:9.8px;top:10.8px;width:4.3px;height:1px;background:#333"></div><div class="a" style="left:15.1px;top:10.8px;width:6.3px;height:1px;background:#333"></div><div class="a" style="left:22.3px;top:10.8px;width:4.2px;height:1px;background:#333"></div><div class="a" style="left:27.4px;top:10.8px;width:6.8px;height:1px;background:#333"></div><div class="a" style="left:35.1px;top:10.8px;width:6.3px;height:1px;background:#333"></div><div class="a" style="left:42.3px;top:10.8px;width:2.5px;height:1px;background:#333"></div><div class="a" style="left:45.7px;top:10.8px;width:3.4px;height:1px;background:#333"></div><div class="a" style="left:50.1px;top:10.8px;width:6.6px;height:1px;background:#333"></div><div class="a" style="left:57.6px;top:10.8px;width:4.6px;height:1px;background:#333"></div><div class="a" style="left:63.1px;top:10.8px;width:6.9px;height:1px;background:#333"></div><div class="a" style="left:70.9px;top:10.8px;width:4.3px;height:1px;background:#333"></div><div class="a" style="left:76.1px;top:10.8px;width:2.8px;height:1px;background:#333"></div><div class="a" style="left:79.8px;top:10.8px;width:3.2px;height:1px;background:#333"></div><div class="a" style="left:3.0px;top:13.3px;width:6.0px;height:1px;background:#444"></div><div class="a" style="left:9.9px;top:13.3px;width:3.7px;height:1px;background:#444"></div><div class="a" style="left:14.5px;top:13.3px;width:2.9px;height:1px;background:#444"></div><div class="a" style="left:18.3px;top:13.3px;width:4.0px;height:1px;background:#444"></div><div class="a" style="left:23.2px;top:13.3px;width:6.8px;height:1px;background:#444"></div><div class="a" style="left:30.9px;top:13.3px;width:5.9px;height:1px;background:#444"></div><div class="a" style="left:3.0px;top:19.3px;width:3.0px;height:1px;background:#d24a38"></div><div class="a" style="left:6.9px;top:19.3px;width:3.6px;height:1px;background:#d24a38"></div><div class="a" style="left:11.4px;top:19.3px;width:3.0px;height:1px;background:#d24a38"></div><div class="a" style="left:15.3px;top:19.3px;width:2.8px;height:1px;background:#d24a38"></div><div class="a" style="left:19.0px;top:19.3px;width:6.1px;height:1px;background:#d24a38"></div><div class="a" style="left:26.0px;top:19.3px;width:3.3px;height:1px;background:#d24a38"></div><div class="a" style="left:30.2px;top:19.3px;width:5.0px;height:1px;background:#d24a38"></div><div class="a" style="left:36.1px;top:19.3px;width:4.5px;height:1px;background:#d24a38"></div><div class="a" style="left:41.5px;top:19.3px;width:3.4px;height:1px;background:#d24a38"></div><div class="a" style="left:45.7px;top:19.3px;width:5.8px;height:1px;background:#d24a38"></div><div class="a" style="left:52.4px;top:19.3px;width:3.1px;height:1px;background:#d24a38"></div><div class="a" style="left:56.4px;top:19.3px;width:5.4px;height:1px;background:#d24a38"></div><div class="a" style="left:62.7px;top:19.3px;width:3.0px;height:1px;background:#d24a38"></div><div class="a" style="left:66.6px;top:19.3px;width:4.4px;height:1px;background:#d24a38"></div><div class="a" style="left:71.9px;top:19.3px;width:3.1px;height:1px;background:#d24a38"></div></div>
<!-- thumb scrollbar -->
<div class="a" style="left:116.5px;top:91px;width:8.5px;height:336px;background:#d8d8d8"></div>
<div class="a" style="left:116.7px;top:93px;width:7.7px;height:6.7px;background:#fff"></div>
<div class="a" style="left:118.3px;top:95px;width:0;height:0;border-left:2.2px solid transparent;border-right:2.2px solid transparent;border-bottom:2.2px solid #555"></div>
<div class="a" style="left:116.7px;top:100.8px;width:7.7px;height:31.6px;background:#fff;border:0.6px solid #bdbdbd"></div>
<div class="a" style="left:116.7px;top:419.4px;width:7.7px;height:6.5px;background:#fff"></div>
<div class="a" style="left:118.3px;top:421.5px;width:0;height:0;border-left:2.2px solid transparent;border-right:2.2px solid transparent;border-top:2.2px solid #555"></div>
<div class="a" style="left:125.8px;top:91px;width:0.7px;height:336px;background:#cfcfcf"></div>
<!-- rulers -->
<div class="a" id="hr" style="left:272px;top:94px;width:388px;height:6.8px;background:#fff;overflow:hidden"><div class="rl" style="left:6.00px">12</div><div class="rl" style="left:21.25px">11</div><div class="rl" style="left:36.50px">10</div><div class="rl" style="left:51.75px">9</div><div class="rl" style="left:67.00px">8</div><div class="rl" style="left:82.25px">7</div><div class="rl" style="left:97.50px">6</div><div class="rl" style="left:112.75px">5</div><div class="rl" style="left:128.00px">4</div><div class="rl" style="left:143.25px">3</div><div class="rl" style="left:158.50px">2</div><div class="rl" style="left:173.75px">1</div><div class="rl" style="left:189.00px">0</div><div class="rl" style="left:204.25px">1</div><div class="rl" style="left:219.50px">2</div><div class="rl" style="left:234.75px">3</div><div class="rl" style="left:250.00px">4</div><div class="rl" style="left:265.25px">5</div><div class="rl" style="left:280.50px">6</div><div class="rl" style="left:295.75px">7</div><div class="rl" style="left:311.00px">8</div><div class="rl" style="left:326.25px">9</div><div class="rl" style="left:341.50px">10</div><div class="rl" style="left:356.75px">11</div><div class="rl" style="left:372.00px">12</div><div class="rt1" style="left:3.38px"></div><div class="rd" style="left:7.19px"></div><div class="rd" style="left:14.81px"></div><div class="rt1" style="left:18.62px"></div><div class="rd" style="left:22.44px"></div><div class="rd" style="left:30.06px"></div><div class="rt1" style="left:33.88px"></div><div class="rd" style="left:37.69px"></div><div class="rd" style="left:45.31px"></div><div class="rt1" style="left:49.12px"></div><div class="rd" style="left:52.94px"></div><div class="rd" style="left:60.56px"></div><div class="rt1" style="left:64.38px"></div><div class="rd" style="left:68.19px"></div><div class="rd" style="left:75.81px"></div><div class="rt1" style="left:79.62px"></div><div class="rd" style="left:83.44px"></div><div class="rd" style="left:91.06px"></div><div class="rt1" style="left:94.88px"></div><div class="rd" style="left:98.69px"></div><div class="rd" style="left:106.31px"></div><div class="rt1" style="left:110.12px"></div><div class="rd" style="left:113.94px"></div><div class="rd" style="left:121.56px"></div><div class="rt1" style="left:125.38px"></div><div class="rd" style="left:129.19px"></div><div class="rd" style="left:136.81px"></div><div class="rt1" style="left:140.62px"></div><div class="rd" style="left:144.44px"></div><div class="rd" style="left:152.06px"></div><div class="rt1" style="left:155.88px"></div><div class="rd" style="left:159.69px"></div><div class="rd" style="left:167.31px"></div><div class="rt1" style="left:171.12px"></div><div class="rd" style="left:174.94px"></div><div class="rd" style="left:182.56px"></div><div class="rt1" style="left:186.38px"></div><div class="rd" style="left:190.19px"></div><div class="rd" style="left:197.81px"></div><div class="rt1" style="left:201.62px"></div><div class="rd" style="left:205.44px"></div><div class="rd" style="left:213.06px"></div><div class="rt1" style="left:216.88px"></div><div class="rd" style="left:220.69px"></div><div class="rd" style="left:228.31px"></div><div class="rt1" style="left:232.12px"></div><div class="rd" style="left:235.94px"></div><div class="rd" style="left:243.56px"></div><div class="rt1" style="left:247.38px"></div><div class="rd" style="left:251.19px"></div><div class="rd" style="left:258.81px"></div><div class="rt1" style="left:262.62px"></div><div class="rd" style="left:266.44px"></div><div class="rd" style="left:274.06px"></div><div class="rt1" style="left:277.88px"></div><div class="rd" style="left:281.69px"></div><div class="rd" style="left:289.31px"></div><div class="rt1" style="left:293.12px"></div><div class="rd" style="left:296.94px"></div><div class="rd" style="left:304.56px"></div><div class="rt1" style="left:308.38px"></div><div class="rd" style="left:312.19px"></div><div class="rd" style="left:319.81px"></div><div class="rt1" style="left:323.62px"></div><div class="rd" style="left:327.44px"></div><div class="rd" style="left:335.06px"></div><div class="rt1" style="left:338.88px"></div><div class="rd" style="left:342.69px"></div><div class="rd" style="left:350.31px"></div><div class="rt1" style="left:354.12px"></div><div class="rd" style="left:357.94px"></div><div class="rd" style="left:365.56px"></div><div class="rt1" style="left:369.38px"></div><div class="rd" style="left:373.19px"></div><div class="rd" style="left:380.81px"></div><div class="rt1" style="left:384.62px"></div></div>
<div class="a" id="vr" style="left:129.6px;top:110.4px;width:7.4px;height:290px;background:#fafafa"><div class="vl" style="top:6.25px">9</div><div class="vt1" style="top:16.88px"></div><div class="vd" style="top:13.06px"></div><div class="vd" style="top:20.69px"></div><div class="vl" style="top:21.50px">8</div><div class="vt1" style="top:32.12px"></div><div class="vd" style="top:28.31px"></div><div class="vd" style="top:35.94px"></div><div class="vl" style="top:36.75px">7</div><div class="vt1" style="top:47.38px"></div><div class="vd" style="top:43.56px"></div><div class="vd" style="top:51.19px"></div><div class="vl" style="top:52.00px">6</div><div class="vt1" style="top:62.62px"></div><div class="vd" style="top:58.81px"></div><div class="vd" style="top:66.44px"></div><div class="vl" style="top:67.25px">5</div><div class="vt1" style="top:77.88px"></div><div class="vd" style="top:74.06px"></div><div class="vd" style="top:81.69px"></div><div class="vl" style="top:82.50px">4</div><div class="vt1" style="top:93.12px"></div><div class="vd" style="top:89.31px"></div><div class="vd" style="top:96.94px"></div><div class="vl" style="top:97.75px">3</div><div class="vt1" style="top:108.38px"></div><div class="vd" style="top:104.56px"></div><div class="vd" style="top:112.19px"></div><div class="vl" style="top:113.00px">2</div><div class="vt1" style="top:123.62px"></div><div class="vd" style="top:119.81px"></div><div class="vd" style="top:127.44px"></div><div class="vl" style="top:128.25px">1</div><div class="vt1" style="top:138.88px"></div><div class="vd" style="top:135.06px"></div><div class="vd" style="top:142.69px"></div><div class="vl" style="top:143.50px">0</div><div class="vt1" style="top:154.12px"></div><div class="vd" style="top:150.31px"></div><div class="vd" style="top:157.94px"></div><div class="vl" style="top:158.75px">1</div><div class="vt1" style="top:169.38px"></div><div class="vd" style="top:165.56px"></div><div class="vd" style="top:173.19px"></div><div class="vl" style="top:174.00px">2</div><div class="vt1" style="top:184.62px"></div><div class="vd" style="top:180.81px"></div><div class="vd" style="top:188.44px"></div><div class="vl" style="top:189.25px">3</div><div class="vt1" style="top:199.88px"></div><div class="vd" style="top:196.06px"></div><div class="vd" style="top:203.69px"></div><div class="vl" style="top:204.50px">4</div><div class="vt1" style="top:215.12px"></div><div class="vd" style="top:211.31px"></div><div class="vd" style="top:218.94px"></div><div class="vl" style="top:219.75px">5</div><div class="vt1" style="top:230.38px"></div><div class="vd" style="top:226.56px"></div><div class="vd" style="top:234.19px"></div><div class="vl" style="top:235.00px">6</div><div class="vt1" style="top:245.62px"></div><div class="vd" style="top:241.81px"></div><div class="vd" style="top:249.44px"></div><div class="vl" style="top:250.25px">7</div><div class="vt1" style="top:260.88px"></div><div class="vd" style="top:257.06px"></div><div class="vd" style="top:264.69px"></div><div class="vl" style="top:265.50px">8</div><div class="vt1" style="top:276.12px"></div><div class="vd" style="top:272.31px"></div><div class="vd" style="top:279.94px"></div><div class="vl" style="top:280.75px">9</div></div>
<!-- main slide -->
<div class="a" id="slide" style="left:272px;top:110px;width:388px;height:293px;overflow:hidden">
  <div class="a" style="left:0;top:0;width:388px;height:80px;background:#fff"></div>
  <div class="a" style="left:0;top:0;width:388px;height:80px;background:radial-gradient(ellipse 230px 140px at 0 0,#d3d3d3 0%,#e4e4e4 35%,rgba(245,245,245,0.6) 70%,rgba(255,255,255,0) 100%)"></div>
  <div class="a" style="left:0;top:0;width:388px;height:16px;background:linear-gradient(90deg,rgba(230,230,230,0) 0%,rgba(236,236,236,0.8) 35%,#ececec 60%,#e0e0e0 85%,#cdcdcd 100%)"></div>
  <div class="a" style="left:0;top:0;width:388px;height:1px;background:#c8c8c8"></div>
  <div class="a slt" style="left:40.2px;top:5.2px;font-size:13.7px;color:#1a4d1e;transform:scaleX(0.808);-webkit-text-stroke:0.25px #1a4d1e">НАЦІОНАЛЬНИЙ УНІВЕРСИТЕТ ХАРЧОВИХ ТЕХНОЛОГІЙ</div>
  <div class="a slt" style="left:215.5px;top:28.5px;font-size:9.7px;color:#3c9c44;transform:scaleX(0.86)">СЕРТИФІКАТНА</div>
  <div class="a" style="left:286.10px;top:25px;width:1.65px;height:11.25px;background:#0d4a10"></div>
<div class="a" style="left:289.00px;top:25px;width:1.50px;height:11.25px;background:#0d4a10"></div>
<div class="a" style="left:291.75px;top:25px;width:1.85px;height:11.25px;background:#43a845"></div>
<div class="a" style="left:294.90px;top:25px;width:6.85px;height:11.25px;background:#237a25"></div>
<div class="a" style="left:302.40px;top:25px;width:0.80px;height:11.25px;background:#0d4a10"></div>
<div class="a" style="left:304.90px;top:25px;width:4.35px;height:11.25px;background:#3aa33c"></div>
<div class="a" style="left:310.75px;top:25px;width:1.00px;height:11.25px;background:#0d4a10"></div>
<div class="a" style="left:313.00px;top:25px;width:15.00px;height:11.25px;background:#135a16"></div>
<div class="a" style="left:329.00px;top:25px;width:1.75px;height:11.25px;background:#0d4a10"></div>
<div class="a" style="left:332.00px;top:25px;width:2.00px;height:11.25px;background:#43a845"></div>
<div class="a" style="left:334.90px;top:25px;width:1.85px;height:11.25px;background:#0d4a10"></div>
<div class="a" style="left:338.00px;top:25px;width:5.00px;height:11.25px;background:#1d6420"></div>
<div class="a" style="left:343.60px;top:25px;width:0.80px;height:11.25px;background:#7fbf80"></div>
<div class="a" style="left:344.90px;top:25px;width:1.20px;height:11.25px;background:#0d4a10"></div>
<div class="a" style="left:348.00px;top:25px;width:3.75px;height:11.25px;background:#237a25"></div>
<div class="a" style="left:353.00px;top:25px;width:1.25px;height:11.25px;background:#8fc890"></div>
<div class="a" style="left:356.00px;top:25px;width:15.00px;height:11.25px;background:#2ea532"></div>
<div class="a" style="left:238.00px;top:60px;width:1.00px;height:9px;background:#0d4a10"></div>
<div class="a" style="left:240.00px;top:60px;width:3.70px;height:9px;background:#43a845"></div>
<div class="a" style="left:245.60px;top:60px;width:0.90px;height:9px;background:#0d4a10"></div>
<div class="a" style="left:247.90px;top:60px;width:4.20px;height:9px;background:#1d6420"></div>
<div class="a" style="left:253.80px;top:60px;width:1.20px;height:9px;background:#5fb860"></div>
<div class="a" style="left:256.00px;top:60px;width:1.75px;height:9px;background:#0d4a10"></div>
<div class="a" style="left:259.00px;top:60px;width:3.50px;height:9px;background:#237a25"></div>
<div class="a" style="left:265.00px;top:60px;width:1.00px;height:9px;background:#a0c0a0"></div>
<div class="a" style="left:267.30px;top:60px;width:3.40px;height:9px;background:#0d4a10"></div>
<div class="a" style="left:272.60px;top:60px;width:1.10px;height:9px;background:#0d4a10"></div>
<div class="a" style="left:274.80px;top:60px;width:1.50px;height:9px;background:#5fb860"></div>
<div class="a" style="left:278.00px;top:60px;width:1.10px;height:9px;background:#0d4a10"></div>
<div class="a" style="left:280.25px;top:60px;width:12.35px;height:9px;background:#135a16"></div>
<div class="a" style="left:294.30px;top:60px;width:1.10px;height:9px;background:#a8c0a8"></div>
<div class="a" style="left:296.90px;top:60px;width:2.50px;height:9px;background:#43a845"></div>
<div class="a" style="left:302.20px;top:60px;width:1.10px;height:9px;background:#0d4a10"></div>
<div class="a" style="left:304.40px;top:60px;width:4.60px;height:9px;background:#1d6420"></div>
<div class="a" style="left:310.60px;top:60px;width:1.70px;height:9px;background:#5fb860"></div>
<div class="a" style="left:313.40px;top:60px;width:3.40px;height:9px;background:#0d4a10"></div>
  <div class="a slt" style="left:214px;top:41.9px;font-size:16.7px;color:#17561b;transform:scaleX(0.87);-webkit-text-stroke:0.45px #17561b">ОСВІТНЯ ПРОФЕСІЙНА</div>
  <div class="a slt" style="left:322.6px;top:58.6px;font-size:11.9px;color:#3a9442;transform:scaleX(0.90)">ПРОГРАМА</div>
  <div class="a" style="left:0;top:80px;width:388px;height:1px;background:#f4f4f4"></div><div class="a" style="left:0;top:81px;width:388px;height:51.5px;background:#1b9b23"></div>
  <div class="a" style="left:0;top:132.5px;width:388px;height:52.5px;background:#028807"></div>
  <div class="a" style="left:0;top:185px;width:388px;height:52.5px;background:#006603"></div>
  <div class="a" style="left:0;top:237.5px;width:388px;height:55.5px;background:#004702"></div>
  <div class="a slt" style="left:18px;top:85.9px;font-size:19.6px;font-weight:bold;color:#fff;transform:scaleX(0.843)">«ТЕХНОЛОГІЇ В ГОТЕЛЬНО-РЕСТОРАННОМУ</div>
  <div class="a slt" style="left:156px;top:109.4px;font-size:19.6px;font-weight:bold;color:#fff;transform:scaleX(0.86)">БІЗНЕСІ»</div>
  <div class="a slt" style="left:18.3px;top:192.6px;font-size:12.7px;font-weight:bold;color:#fff;transform:scaleX(0.8825)">КЕРІВНИК ПРОГРАМИ</div>
  <div class="a slr" style="right:246.4px;top:208px;font-size:9.5px;color:#fff;transform:scaleX(0.84)">д.т.н., професор,</div>
  <div class="a slr" style="right:246.4px;top:220px;font-size:9.5px;color:#fff;transform:scaleX(0.86)">Сильчук Тетяна Анатоліївна</div>
</div>
<!-- notes -->
<div class="a" style="left:126.5px;top:407.5px;width:673.5px;height:0.8px;background:#d0d0d0"></div>
<div class="a" style="left:132.5px;top:414px;font-size:7.6px;color:#555">Щелкните, чтобы добавить заметки</div>
<!-- right scrollbar -->
<div class="a" style="left:793px;top:91px;width:7px;height:316px;background:#dcdcdc"></div>
<div class="a" style="left:793.5px;top:373px;width:6.5px;height:6px;background:#fff"></div>
<div class="a" style="left:795px;top:375px;width:0;height:0;border-left:2px solid transparent;border-right:2px solid transparent;border-top:2px solid #555"></div>
<div class="a" style="left:794.5px;top:384px;font-size:5px;color:#555">⇞</div>
<div class="a" style="left:794.5px;top:391px;font-size:5px;color:#555">⇟</div>
<!-- windows activation -->
<div class="a" style="left:592.6px;top:375.5px;font-size:11.4px;color:rgba(170,170,170,0.8);transform:scaleX(0.91);transform-origin:0 0">Активация Windows</div>
<div class="a" style="left:592.6px;top:390.3px;font-size:7.35px;color:rgba(170,170,170,0.8)">Чтобы активировать Windows, перейдите в раздел</div>
<div class="a" style="left:592.6px;top:400.5px;font-size:7.35px;color:rgba(170,170,170,0.8)">"Параметры".</div>
<!-- status bar -->
<div class="a" style="left:5px;top:430.5px;font-size:5.3px;color:#444">Слайд 1 из 44</div>
<svg style="left:48.5px;top:429.5px" width="8" height="7" viewBox="0 0 8 7" fill="none" stroke="#666" stroke-width="0.6"><rect x="0.5" y="0.5" width="4" height="6"/><path d="M4.5 2 H7.5 V6.5 H4.5 M5.5 3.5 L6 4.5 L7 3"/></svg>
<div class="a" style="left:65px;top:430.5px;font-size:5.3px;color:#444">русский (Украина)</div>
<svg style="left:526px;top:430px" width="6" height="6" viewBox="0 0 6 6" fill="#555"><path d="M1 5 H5 V4 L3 1 L1 4 Z"/></svg>
<div class="a" style="left:533px;top:430.5px;font-size:5.3px;color:#444">Заметки</div>
<svg style="left:565px;top:430px" width="6" height="6" viewBox="0 0 6 6" fill="#555"><path d="M0 0 H6 V4 H2 L0.5 5.5 V4 H0 Z"/></svg>
<div class="a" style="left:573px;top:430.5px;font-size:5.3px;color:#444">Примечания</div>
<div class="a" style="left:615px;top:428px;width:25px;height:10.5px;background:#cdcdcd"></div>
<svg style="left:623.5px;top:430px" width="8" height="7" viewBox="0 0 8 7" fill="none" stroke="#444" stroke-width="0.7"><rect x="0.5" y="0.5" width="7" height="6"/><path d="M2.5 0.5 V6.5 M3.5 2.5 H6 M3.5 4.5 H6"/></svg>
<svg style="left:643px;top:430px" width="8" height="7" viewBox="0 0 8 7" fill="none" stroke="#555" stroke-width="0.7"><rect x="0.5" y="0.5" width="3" height="2.5"/><rect x="4.5" y="0.5" width="3" height="2.5"/><rect x="0.5" y="4" width="3" height="2.5"/><rect x="4.5" y="4" width="3" height="2.5"/></svg>
<svg style="left:664px;top:430px" width="8" height="7" viewBox="0 0 8 7" fill="none" stroke="#555" stroke-width="0.7"><path d="M0.5 0.5 H7.5 M0.5 0.5 V6.5 H7.5 V0.5 M4 0.5 V6.5 M1.5 2.5 H3 M5 2.5 H6.5"/></svg>
<svg style="left:685px;top:430px" width="8" height="7" viewBox="0 0 8 7" fill="none" stroke="#555" stroke-width="0.7"><path d="M0 0.5 H8 M4 0.5 V2 M1.5 2 H6.5 L5.5 6.5 H2.5 Z"/></svg>
<div class="a" style="left:701.5px;top:433px;width:3px;height:0.8px;background:#555"></div>
<div class="a" style="left:708px;top:433.2px;width:55px;height:0.7px;background:#999"></div>
<div class="a" style="left:733.5px;top:430px;width:1.8px;height:6.5px;background:#555"></div>
<div class="a" style="left:764.5px;top:433px;width:4px;height:0.8px;background:#555"></div>
<div class="a" style="left:766.1px;top:431.4px;width:0.8px;height:4px;background:#555"></div>
<div class="a" style="left:773px;top:430.5px;font-size:5.3px;color:#444">70%</div>
<svg style="left:792px;top:430px" width="7" height="7" viewBox="0 0 7 7" fill="none" stroke="#666" stroke-width="0.6"><rect x="0.5" y="0.5" width="6" height="6"/><path d="M2 2 L5 5 M2 5 L5 2"/></svg>


<div class="a" id="video" style="left:684px;top:0;width:116px;height:329px;background:#1f1f1f;overflow:hidden">
 <!-- v1 -->
 <div class="a" style="left:13.4px;top:0;width:87px;height:63.5px;background:linear-gradient(90deg,#a4a6a2,#acadaa 60%,#b6b6b2);overflow:hidden">
  <div class="a" style="left:0;top:0;width:6.5px;height:56px;background:linear-gradient(180deg,#5a626c,#3f454c 50%,#6a6e72);filter:blur(0.5px)"></div>
  <div class="a" style="left:40px;top:-2px;width:40px;height:25.5px;background:linear-gradient(170deg,#cdb283,#b4976a 70%,#8a7658);filter:blur(0.7px)"></div>
  <div class="a" style="left:68px;top:41px;width:7px;height:9px;background:#6e6a60;filter:blur(0.6px)"></div>
  <div class="a" style="left:15px;top:1px;width:44px;height:47px;background:#2e2826;border-radius:50% 50% 30% 35%;filter:blur(1.2px)"></div>
  <div class="a" style="left:8px;top:42px;width:75px;height:30px;background:#bfcfe3;border-radius:35% 40% 0 0;filter:blur(1.2px)"></div>
  <div class="a" style="left:26px;top:38px;width:18px;height:12px;background:#ae9a8e;border-radius:0 0 50% 50%;filter:blur(1px)"></div>
  <div class="a" style="left:21px;top:6.5px;width:31px;height:37px;background:radial-gradient(ellipse at 48% 40%,#bca698,#ab9284 60%,#927668);border-radius:45% 45% 50% 50%;filter:blur(1.1px)"></div>
  <div class="a" style="left:26px;top:21.5px;width:6px;height:2.2px;background:#6a5450;border-radius:50%;filter:blur(0.7px)"></div>
  <div class="a" style="left:38px;top:21.5px;width:6px;height:2.2px;background:#6a5450;border-radius:50%;filter:blur(0.7px)"></div>
  <div class="a" style="left:30.5px;top:36px;width:8px;height:3.2px;background:#5a3838;border-radius:50%;filter:blur(0.6px)"></div>
 </div>
 <div class="a" style="left:0;top:56.5px;width:70.5px;height:8px;background:rgba(28,28,28,0.8)"></div>
 <div class="a" style="left:1px;top:58.5px;font-size:5.15px;color:#f4f4f4">Тетяна Анатоліївна Сильчук</div>
 <!-- v2 -->
 <div class="a" style="left:33px;top:65.5px;width:49px;height:66.5px;background:#c4b5a6;overflow:hidden">
  <div class="a" style="left:0;top:0;width:10px;height:38px;background:linear-gradient(180deg,#75706a,#66615c);filter:blur(0.5px)"></div>
  <div class="a" style="left:10px;top:0;width:3px;height:36px;background:#dcd4cc"></div>
  <div class="a" style="left:26px;top:0;width:9px;height:6.5px;border:1px solid #8a6e56;background:#d0c0b0"></div>
  <div class="a" style="left:5.5px;top:25px;width:9px;height:12px;background:#202020;filter:blur(0.6px)"></div>
  <div class="a" style="left:0;top:34px;width:16px;height:5px;background:#dedbd6;filter:blur(0.4px)"></div>
  <div class="a" style="left:19px;top:8px;width:22px;height:14px;background:#3c2e28;border-radius:50% 50% 20% 20%;filter:blur(1px)"></div>
  <div class="a" style="left:32px;top:12px;width:9px;height:36px;background:#3a2c26;border-radius:30% 50% 40% 40%;filter:blur(1.1px)"></div>
  <div class="a" style="left:18px;top:14px;width:5px;height:26px;background:#3a2c26;border-radius:40%;filter:blur(1px)"></div>
  <div class="a" style="left:23px;top:28px;width:10px;height:10px;background:#b09484;filter:blur(1px)"></div>
  <div class="a" style="left:0;top:36px;width:49px;height:31px;background:linear-gradient(90deg,#6a685a,#7e7c6a 50%,#8a8874);border-radius:20% 45% 0 0;filter:blur(1px)"></div>
  <div class="a" style="left:21px;top:12px;width:14px;height:19px;background:#c6aa9a;border-radius:45% 45% 50% 50%;filter:blur(0.9px)"></div>
  <div class="a" style="left:24px;top:26px;width:13px;height:0.8px;background:#262626"></div>
  <div class="a" style="left:16px;top:45px;width:11px;height:11px;background:#bc9e8e;border-radius:50%;filter:blur(1px)"></div>
  <div class="a" style="left:0;top:51px;width:13px;height:10px;background:#dddad6;filter:blur(0.7px)"></div>
 </div>
 <div class="a" style="left:1.5px;top:125px;width:58px;height:6.5px;background:rgba(28,28,28,0.55)"></div>
 <div class="a" style="left:2px;top:125.3px;font-size:5.5px;color:#f4f4f4">ГС-1-1 Альона Голота</div>
 <div class="a" style="left:33px;top:131px;width:25px;height:1px;background:#b87048"></div>
 <!-- name tile -->
 <div class="a" style="left:28px;top:161px;font-size:7.3px;font-weight:bold;color:#f2f2f2">Нечипорук Анна</div>
 <div class="a" style="left:2px;top:190px;font-size:5.7px;color:#f4f4f4">Нечипорук Анна</div>
 <!-- v3 -->
 <div class="a" style="left:39px;top:197.8px;width:37px;height:65.2px;background:#0b0a09;overflow:hidden">
  <div class="a" style="left:4px;top:11px;width:30px;height:42px;background:#2a211b;border-radius:50% 50% 35% 35%;filter:blur(1.8px)"></div>
  <div class="a" style="left:8px;top:40px;width:26px;height:30px;background:#15110e;border-radius:40% 40% 0 0;filter:blur(1.5px)"></div>
  <div class="a" style="left:8px;top:15px;width:20px;height:27px;background:radial-gradient(ellipse at 50% 30%,#76604f,#5a473b 55%,#33281f);border-radius:45% 45% 50% 50%;filter:blur(1.3px)"></div>
 </div>
 <div class="a" style="left:2px;top:255.8px;font-size:5.4px;color:#f4f4f4">Анна Тімченко ГС-1-3м</div>
 <!-- v4 -->
 <div class="a" style="left:33px;top:263px;width:49px;height:65.2px;background:#1e1e1e;overflow:hidden">
  <div class="a" style="left:40px;top:0;width:9px;height:65px;background:#272727"></div>
  <div class="a" style="left:12px;top:9px;width:26px;height:30px;background:#2c2420;border-radius:50% 50% 35% 35%;filter:blur(1.3px)"></div>
  <div class="a" style="left:4px;top:45px;width:42px;height:25px;background:#0f0f0f;border-radius:45% 45% 0 0;filter:blur(1px)"></div>
  <div class="a" style="left:14.5px;top:16px;width:20px;height:31px;background:radial-gradient(ellipse at 50% 40%,#8e7e76,#76665e 60%,#54463e);border-radius:45% 45% 50% 50%;filter:blur(1.1px)"></div>
  <div class="a" style="left:16px;top:26px;width:8px;height:4px;border:0.5px solid rgba(190,180,175,0.5);border-radius:2px"></div>
  <div class="a" style="left:25px;top:26px;width:8px;height:4px;border:0.5px solid rgba(190,180,175,0.5);border-radius:2px"></div>
  <div class="a" style="left:16px;top:44px;width:0.6px;height:22px;background:rgba(220,220,220,0.45);transform:rotate(-8deg)"></div>
  <div class="a" style="left:32px;top:44px;width:0.6px;height:22px;background:rgba(220,220,220,0.45);transform:rotate(8deg)"></div>
 </div>
 <div class="a" style="left:2px;top:322px;font-size:5.3px;color:#f4f4f4">Олена Волкова</div>
</div>

</div></body></html>
